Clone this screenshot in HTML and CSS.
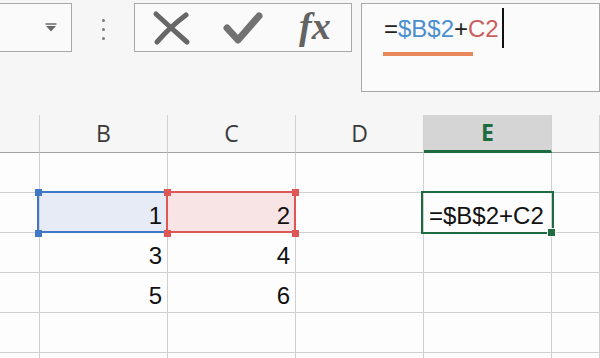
FILE: index.html
```html
<!DOCTYPE html>
<html>
<head>
    <meta charset="UTF-8">
    <title>Formula bar</title>
    <link rel="stylesheet" href="styles.css">
</head>
<body>
    <div class="toolbar">
        <div class="name-box">
            <svg class="drop" width="12" height="9" viewBox="0 0 12 9">
                <path d="M0.5 1 H11.5" stroke="#6a6a6a" stroke-width="1.5"/>
                <path d="M1 3 L11 3 L6 8.5 Z" fill="#6a6a6a"/>
            </svg>
        </div>
        <div class="grip">
            <span class="dot"></span>
            <span class="dot"></span>
            <span class="dot"></span>
        </div>
        <div class="buttons">
            <div class="btn">
                <svg width="40" height="40" viewBox="0 0 40 40">
                    <path d="M5 6 Q20 20 36 34" stroke="#676767" stroke-width="5" fill="none" stroke-linecap="round"/>
                    <path d="M35 7 Q19 19 6 34" stroke="#676767" stroke-width="5" fill="none" stroke-linecap="round"/>
                </svg>
            </div>
            <div class="btn">
                <svg width="44" height="40" viewBox="0 0 44 40">
                    <path d="M6 20 L17 32 L38 8" stroke="#727272" stroke-width="7" fill="none" stroke-linecap="round" stroke-linejoin="round"/>
                </svg>
            </div>
            <div class="btn fx">fx</div>
        </div>
        <div class="formula-box">
            <div class="formula-line">
                <span class="formula-text"><span class="eq">=</span><span class="ref-b">$B$2</span><span class="eq">+</span><span class="ref-c">C2</span></span>
                <span class="cursor"></span>
            </div>
            <div class="underline"></div>
        </div>
    </div>

    <div class="sheet">
        <div class="head"></div>
        <div class="head">B</div>
        <div class="head">C</div>
        <div class="head">D</div>
        <div class="head active-head">E</div>
        <div class="head"></div>

        <div class="cell"></div>
        <div class="cell"></div>
        <div class="cell"></div>
        <div class="cell"></div>
        <div class="cell"></div>
        <div class="cell"></div>

        <div class="cell"></div>
        <div class="cell num range-b">1</div>
        <div class="cell num range-c">2</div>
        <div class="cell"></div>
        <div class="cell text">=$B$2+C2</div>
        <div class="cell"></div>

        <div class="cell"></div>
        <div class="cell num">3</div>
        <div class="cell num">4</div>
        <div class="cell"></div>
        <div class="cell"></div>
        <div class="cell"></div>

        <div class="cell"></div>
        <div class="cell num">5</div>
        <div class="cell num">6</div>
        <div class="cell"></div>
        <div class="cell"></div>
        <div class="cell"></div>

        <div class="cell"></div>
        <div class="cell"></div>
        <div class="cell"></div>
        <div class="cell"></div>
        <div class="cell"></div>
        <div class="cell"></div>

        <div class="cell"></div>
        <div class="cell"></div>
        <div class="cell"></div>
        <div class="cell"></div>
        <div class="cell"></div>
        <div class="cell"></div>

        <!-- range finder and active cell overlays -->
        <div class="range blue-range"></div>
        <div class="range red-range"></div>
        <span class="handle blue" style="left:35px;top:74px"></span>
        <span class="handle blue" style="left:35px;top:115px"></span>
        <span class="handle red" style="left:164px;top:74px"></span>
        <span class="handle red" style="left:164px;top:115px"></span>
        <span class="handle red" style="left:292px;top:74px"></span>
        <span class="handle red" style="left:292px;top:115px"></span>
        <div class="active-cell"></div>
        <span class="fill-handle"></span>
    </div>
</body>
</html>
```

FILE: styles.css
```css
* {
    margin: 0;
    padding: 0;
    box-sizing: border-box;
}

body {
    width: 600px;
    height: 358px;
    overflow: hidden;
    font-family: "Liberation Sans", Arial, sans-serif;
    background-color: #f6f6f6;
}

.toolbar {
    display: flex;
    align-items: flex-start;
    height: 115px;
    padding-top: 3px;
}

.name-box {
    width: 76px;
    height: 49px;
    margin-left: -3px;
    border: 1px solid #a8a8a8;
    background-color: #fafafa;
    display: flex;
    align-items: flex-start;
    justify-content: flex-end;
    padding: 19px 14px 0 0;
}

.grip {
    width: 62px;
    height: 49px;
    display: flex;
    flex-direction: column;
    align-items: center;
    padding-top: 16px;
    gap: 6px;
}

.dot {
    width: 3px;
    height: 3px;
    border-radius: 50%;
    background-color: #7a7a7a;
}

.buttons {
    width: 218px;
    height: 49px;
    border: 1px solid #a8a8a8;
    background-color: #fafafa;
    display: flex;
    align-items: center;
    margin-right: 9px;
}

.btn {
    width: 72px;
    height: 47px;
    display: flex;
    align-items: center;
    justify-content: center;
}

.fx {
    font-family: "Liberation Serif", "Times New Roman", serif;
    font-style: italic;
    font-weight: bold;
    font-size: 38px;
    color: #636363;
    padding-bottom: 4px;
}

.formula-box {
    width: 241px;
    height: 89px;
    border: 1px solid #a8a8a8;
    background-color: #fbfbfb;
    padding-left: 22px;
}

.formula-line {
    display: flex;
    align-items: flex-start;
    margin-top: 4px;
}

.formula-text {
    font-size: 24px;
    line-height: 30px;
    margin-top: 6px;
}

.eq {
    color: #222;
}

.ref-b {
    color: #4b8fcf;
}

.ref-c {
    color: #c95f5f;
}

.cursor {
    width: 2px;
    height: 40px;
    margin-left: 3px;
    background-color: #111;
}

.underline {
    width: 90px;
    height: 4px;
    margin-left: -1px;
    margin-top: 4px;
    background-color: #e8875a;
}

.sheet {
    position: relative;
    display: grid;
    grid-template-columns: 40px 128px 128px 128px 128px 1fr;
    grid-template-rows: 38px;
    grid-auto-rows: 40px;
    height: 243px;
    overflow: hidden;
    background-color: #fdfdfd;
}

.head {
    background-color: #f6f6f6;
    border-right: 1px solid #d2d2d2;
    border-bottom: 1px solid #a2a2a2;
    font-family: "Open Sans", "Liberation Sans", sans-serif;
    font-size: 23px;
    color: #3a3a3a;
    text-align: center;
    line-height: 36px;
}

.active-head {
    background-color: #d5d5d5;
    color: #1e6b3f;
    font-weight: bold;
    border-bottom: 3px solid #1e6b3f;
    line-height: 35px;
}

.cell {
    border-right: 1px solid #d0d0d0;
    border-bottom: 1px solid #d0d0d0;
    font-size: 24px;
    color: #111;
    display: flex;
    align-items: flex-end;
    padding-bottom: 2px;
}

.num {
    justify-content: flex-end;
    padding-right: 5px;
}

.text {
    padding-left: 5px;
}

.range-b {
    background-color: #e6ebf6;
}

.range-c {
    background-color: #f8e4e4;
}

.range {
    position: absolute;
    top: 76px;
    height: 42px;
    border: 2px solid;
}

.blue-range {
    left: 37px;
    width: 131px;
    border-color: #3f78c4;
}

.red-range {
    left: 166px;
    width: 130px;
    border-color: #df5656;
}

.handle {
    position: absolute;
    width: 7px;
    height: 7px;
}

.handle.blue {
    background-color: #3f78c4;
}

.handle.red {
    background-color: #df5656;
}

.active-cell {
    position: absolute;
    left: 421px;
    top: 76px;
    width: 133px;
    height: 43px;
    border: 2px solid #1e6b3f;
}

.fill-handle {
    position: absolute;
    left: 547px;
    top: 113px;
    width: 9px;
    height: 9px;
    background-color: #1e6b3f;
    border: 1px solid #fdfdfd;
}
```
